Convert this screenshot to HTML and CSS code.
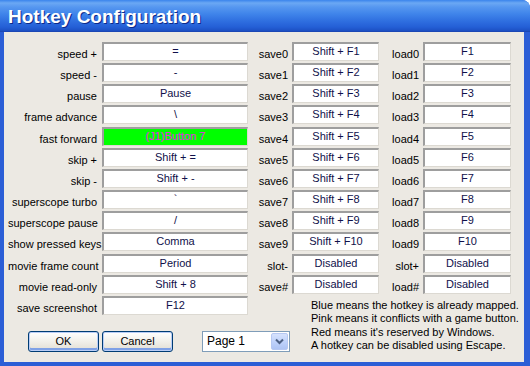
FILE: index.html
```html
<!DOCTYPE html>
<html>
<head>
  <title>Hotkey Configuration</title>
  <link rel="stylesheet" href="styles.css">
</head>
<body>
  <div class="window">
    <header class="titlebar">
      <h1>Hotkey Configuration</h1>
    </header>

    <section class="client">
      <div class="keys">
        <span class="name">speed +</span><span class="field">=</span>
        <span class="name">save0</span><span class="field">Shift + F1</span>
        <span class="name">load0</span><span class="field">F1</span>

        <span class="name">speed -</span><span class="field">-</span>
        <span class="name">save1</span><span class="field">Shift + F2</span>
        <span class="name">load1</span><span class="field">F2</span>

        <span class="name">pause</span><span class="field">Pause</span>
        <span class="name">save2</span><span class="field">Shift + F3</span>
        <span class="name">load2</span><span class="field">F3</span>

        <span class="name">frame advance</span><span class="field">\</span>
        <span class="name">save3</span><span class="field">Shift + F4</span>
        <span class="name">load3</span><span class="field">F4</span>

        <span class="name">fast forward</span><span class="field conflict">(J1)Button 7</span>
        <span class="name">save4</span><span class="field">Shift + F5</span>
        <span class="name">load4</span><span class="field">F5</span>

        <span class="name">skip +</span><span class="field">Shift + =</span>
        <span class="name">save5</span><span class="field">Shift + F6</span>
        <span class="name">load5</span><span class="field">F6</span>

        <span class="name">skip -</span><span class="field">Shift + -</span>
        <span class="name">save6</span><span class="field">Shift + F7</span>
        <span class="name">load6</span><span class="field">F7</span>

        <span class="name">superscope turbo</span><span class="field">`</span>
        <span class="name">save7</span><span class="field">Shift + F8</span>
        <span class="name">load7</span><span class="field">F8</span>

        <span class="name">superscope pause</span><span class="field">/</span>
        <span class="name">save8</span><span class="field">Shift + F9</span>
        <span class="name">load8</span><span class="field">F9</span>

        <span class="name">show pressed keys</span><span class="field">Comma</span>
        <span class="name">save9</span><span class="field">Shift + F10</span>
        <span class="name">load9</span><span class="field">F10</span>

        <span class="name">movie frame count</span><span class="field">Period</span>
        <span class="name">slot-</span><span class="field">Disabled</span>
        <span class="name">slot+</span><span class="field">Disabled</span>

        <span class="name">movie read-only</span><span class="field">Shift + 8</span>
        <span class="name">save#</span><span class="field">Disabled</span>
        <span class="name">load#</span><span class="field">Disabled</span>

        <span class="name">save screenshot</span><span class="field">F12</span>

        <div class="legend">
          <p>Blue means the hotkey is already mapped.</p>
          <p>Pink means it conflicts with a game button.</p>
          <p>Red means it's reserved by Windows.</p>
          <p>A hotkey can be disabled using Escape.</p>
        </div>

        <div class="actions">
          <button class="default">OK</button>
          <button>Cancel</button>
          <div class="select">
            <span>Page 1</span>
            <span class="arrow">
              <svg width="9" height="7" viewBox="0 0 9 7"><path d="M1 1.5 L4.5 5 L8 1.5" fill="none" stroke="#4d6185" stroke-width="2"/></svg>
            </span>
          </div>
        </div>
      </div>
    </section>
  </div>
</body>
</html>
```

FILE: styles.css
```css
* {
  box-sizing: border-box;
  margin: 0;
}

body {
  background-color: #ffffff;
  font-family: "Liberation Sans", Arial, sans-serif;
  font-size: 11px;
}

.window {
  width: 530px;
  height: 366px;
  background-color: #2b5ed6;
  border-radius: 0 8px 0 0;
  padding: 0 6px 4px 4px;
  display: flex;
  flex-direction: column;
}

/* XP style title gradient */
.titlebar {
  height: 32px;
  margin: 0 -6px 0 -4px;
  border-radius: 0 8px 0 0;
  background: linear-gradient(#3a84ec 0, #6ba8f4 3px, #5697f0 7px, #3f84ea 14px, #2f6fe0 21px, #245fd6 27px, #1c4fc2 31px, #1a3fa8 32px);
  padding: 6px 0 0 8px;
}

.titlebar h1 {
  color: #ffffff;
  font-size: 19px;
  line-height: 22px;
  font-weight: bold;
  text-shadow: 1px 1px 0 #0d2a8a;
}

.client {
  flex: 1;
  background-color: #ece9e3;
  padding: 10px 0 0 4px;
}

.keys {
  display: grid;
  grid-template-columns: 94px 146px 44px 87px 44px 88px;
  grid-template-rows: repeat(13, 19px) auto;
  row-gap: 2.17px;
}

.name {
  align-self: end;
  text-align: right;
  padding-right: 4px;
  line-height: 15px;
  margin-bottom: -1px;
  color: #000000;
  white-space: nowrap;
}

.keys > .name:nth-child(6n+1) {
  padding-right: 5px;
}

.field {
  height: 19px;
  background-color: #ffffff;
  border-style: solid;
  border-width: 2px 1px 1px 2px;
  border-color: #9e9e9e #dcd9d2 #dcd9d2 #9e9e9e;
  text-align: center;
  line-height: 15px;
  color: #10104a;
  white-space: nowrap;
}

.field.conflict {
  background-color: #00ff00;
  color: #f020f0;
}

.legend {
  grid-column: 3 / 7;
  grid-row: 13 / 15;
  margin: 3px 0 0 63px;
  color: #000000;
}

.legend p {
  line-height: 13.5px;
  white-space: nowrap;
}

.actions {
  grid-column: 1 / 5;
  grid-row: 14;
  margin-top: 13px;
  padding-left: 20px;
  display: flex;
  align-items: center;
}

button {
  width: 71px;
  height: 21px;
  margin-right: 3px;
  font-family: inherit;
  font-size: 11px;
  color: #000000;
  border: 1px solid #003c74;
  border-radius: 3px;
  background: linear-gradient(#ffffff, #f4f3ee 40%, #e6e3da 85%, #d6d0c5);
  box-shadow: inset 0 0 0 1px #b9cdf6, inset 0 -2px 0 1px #7fa1e6;
}

.select {
  margin-left: 26px;
  width: 88px;
  height: 21px;
  border: 1px solid #7f9db9;
  background-color: #ffffff;
  display: flex;
  align-items: center;
  justify-content: space-between;
  padding: 1px;
}

.select span:first-child {
  padding-left: 3px;
  font-size: 12px;
}

.arrow {
  width: 17px;
  height: 17px;
  border: 1px solid #b6c8f2;
  border-radius: 2px;
  background: linear-gradient(#d6e2fd, #bcd0fa 60%, #aec4f4);
  display: flex;
  align-items: center;
  justify-content: center;
}
```
